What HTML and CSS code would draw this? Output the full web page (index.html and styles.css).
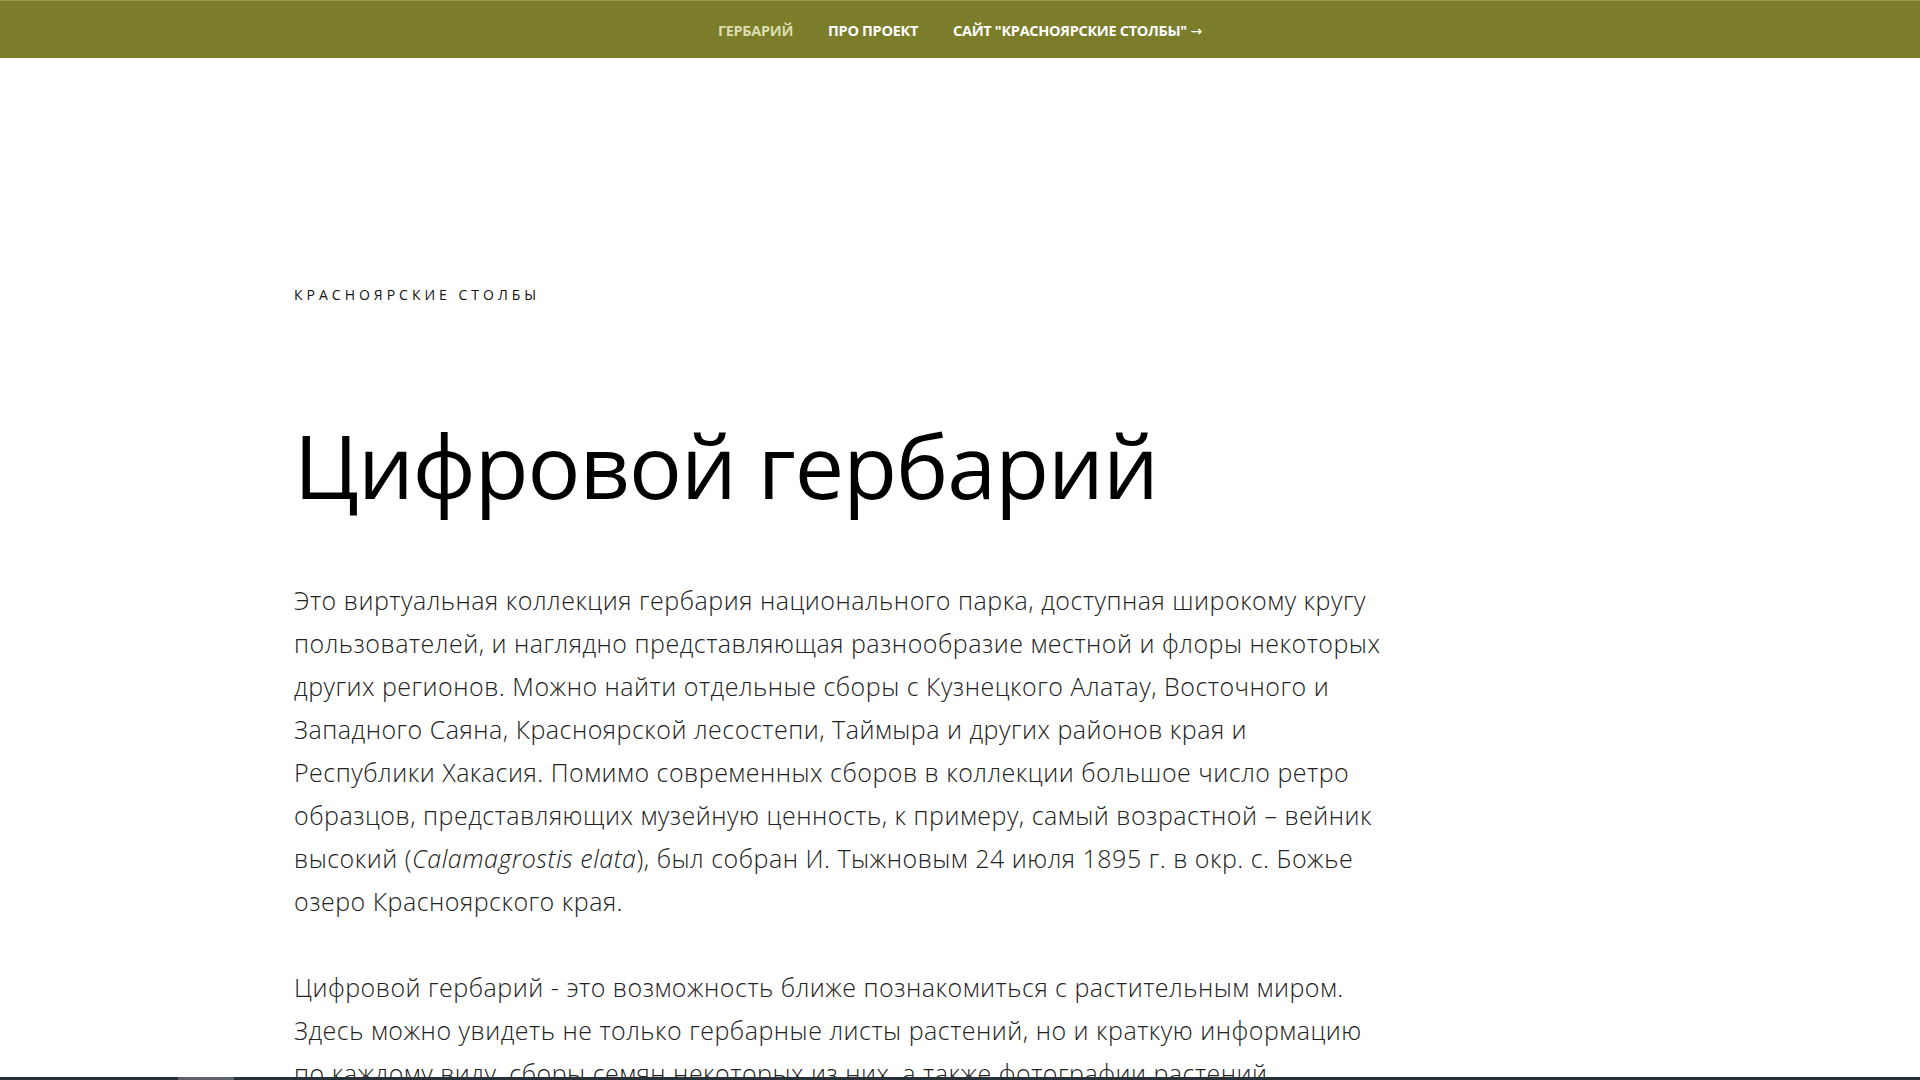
FILE: index.html
```html
<!DOCTYPE html>
<html lang="ru">
<head>
<meta charset="utf-8">
<title>Цифровой гербарий</title>
<link rel="stylesheet" href="styles.css">
</head>
<body>
<header class="topbar">
  <nav class="menu">
    <a class="menu-item menu-item-active" href="#">ГЕРБАРИЙ</a>
    <a class="menu-item" href="#">ПРО ПРОЕКТ</a>
    <a class="menu-item" href="#">САЙТ "КРАСНОЯРСКИЕ СТОЛБЫ" <span class="menu-arrow">→</span></a>
  </nav>
</header>
<main class="content">
  <div class="eyebrow">КРАСНОЯРСКИЕ СТОЛБЫ</div>
  <h1 class="title">Цифровой гербарий</h1>
  <div class="descr">
    <p>Это виртуальная коллекция гербария национального парка, доступная широкому кругу пользователей, и наглядно представляющая разнообразие местной и флоры некоторых других регионов. Можно найти отдельные сборы с Кузнецкого Алатау, Восточного и Западного Саяна, Красноярской лесостепи, Таймыра и других районов края и Республики Хакасия. Помимо современных сборов в коллекции большое число ретро образцов, представляющих музейную ценность, к примеру, самый возрастной – вейник высокий (<em>Calamagrostis elata</em>), был собран И. Тыжновым 24 июля 1895 г. в окр. с. Божье озеро Красноярского края.</p>
    <p>Цифровой гербарий - это возможность ближе познакомиться с растительным миром. Здесь можно увидеть не только гербарные листы растений, но и краткую информацию по каждому виду, сборы семян некоторых из них, а также фотографии растений.</p>
  </div>
</main>
<div class="screen-edge"><span class="screen-edge-mark"></span></div>
</body>
</html>
```
FILE: styles.css
```css
html, body {
  margin: 0;
  padding: 0;
  background: #ffffff;
}
body {
  font-family: "Open Sans", "Noto Sans", sans-serif;
  color: #000;
  overflow: hidden;
}
.topbar {
  height: 58px;
  background: #7b7d2b;
  border-top: 1px solid #9a9c55;
  box-sizing: border-box;
  display: flex;
  align-items: center;
  justify-content: center;
  padding-top: 2px;
}
.menu {
  display: flex;
  gap: 35px;
}
.menu-item {
  font-family: "Open Sans", sans-serif;
  font-weight: 700;
  font-size: 14.5px;
  letter-spacing: -0.3px;
  color: #ffffff;
  text-decoration: none;
}
.menu-arrow {
  font-family: "DejaVu Sans", sans-serif;
  font-weight: 400;
  font-size: 14px;
  letter-spacing: 0;
}
.menu-item-active {
  color: #d9ddb0;
}
.content {
  padding-left: 294px;
  padding-top: 227px;
}
.eyebrow {
  font-family: "Open Sans", sans-serif;
  font-size: 14px;
  line-height: 20px;
  letter-spacing: 4px;
  font-weight: 500;
  color: #111;
}
.title {
  margin: 108px 0 0 0;
  font-family: "Open Sans", sans-serif;
  font-weight: 500;
  font-size: 88px;
  line-height: 1.2;
  letter-spacing: -1px;
  color: #000;
}
.descr {
  margin-top: 60px;
  width: 1095px;
  font-family: "Open Sans", sans-serif;
  font-weight: 300;
  font-size: 25px;
  letter-spacing: 0.5px;
  line-height: 43px;
  color: #222;
}
.descr p {
  margin: 0 0 43px 0;
}
.screen-edge {
  position: fixed;
  left: 0;
  right: 0;
  bottom: 0;
  height: 3px;
  background: #263036;
}
.screen-edge-mark {
  position: absolute;
  left: 178px;
  width: 56px;
  top: 0;
  bottom: 0;
  background: #5d6368;
}
```
